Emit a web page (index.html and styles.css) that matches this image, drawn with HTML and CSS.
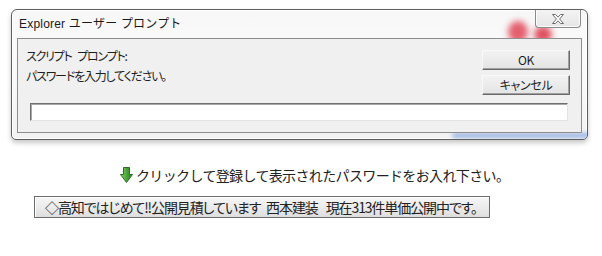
FILE: index.html
```html
<!DOCTYPE html>
<html lang="ja">
<head>
<meta charset="utf-8">
<title>Explorer ユーザー プロンプト</title>
<link rel="stylesheet" href="styles.css">
</head>
<body>
<div class="dialog">
  <div class="blob blob-red1"></div>
  <div class="blob blob-red2"></div>
  <div class="blob blob-blue"></div>
  <div class="titlebar">
    <span class="title">Explorer ユーザー プロンプト</span>
    <div class="close">
      <svg width="12" height="10" viewBox="0 0 12 10"><path d="M0.5 0.5 H3.5 L6 3.2 L8.5 0.5 H11.5 L7.6 5 L11.5 9.5 H8.5 L6 6.8 L3.5 9.5 H0.5 L4.4 5 Z" fill="#ffffff" stroke="#6d6d6d" stroke-width="1" stroke-linejoin="round"/></svg>
    </div>
  </div>
  <div class="panel">
    <div class="prompt-row">
      <div class="msg">
        <p>スクリプト プロンプト:</p>
        <p>パスワードを入力してください。</p>
      </div>
      <div class="btns">
        <div class="btn">OK</div>
        <div class="btn">キャンセル</div>
      </div>
    </div>
    <div class="input"></div>
  </div>
</div>
<div class="hint">
  <svg class="arrow" width="13" height="16" viewBox="0 0 13 16">
    <defs>
      <linearGradient id="g" x1="0" y1="0" x2="1" y2="0">
        <stop offset="0" stop-color="#8fd67a"/>
        <stop offset="0.5" stop-color="#4aa53a"/>
        <stop offset="1" stop-color="#2c7a24"/>
      </linearGradient>
    </defs>
    <path d="M3.5 0.5 H9.5 V7.5 H12.5 L6.5 15.5 L0.5 7.5 H3.5 Z" fill="url(#g)" stroke="#2f6b2a" stroke-width="1" stroke-linejoin="round"/>
  </svg>
  <span>クリックして登録して表示されたパスワードをお入れ下さい。</span>
</div>
<div class="notice">◇高知ではじめて!!公開見積しています&ensp;西本建装&ensp;&nbsp;現在313件単価公開中です。</div>
</body>
</html>
```
FILE: styles.css
```css
html, body {
  margin: 0;
  padding: 0;
  background: #ffffff;
}
body {
  padding-top: 9px;
  font-family: "Noto Sans CJK JP", "Liberation Sans", sans-serif;
  color: #222;
}
.dialog {
  position: relative;
  margin-left: 11px;
  width: 577px;
  height: 131px;
  box-sizing: border-box;
  border: 1px solid #5e5e5e;
  border-radius: 6px 6px 5px 5px;
  background: linear-gradient(180deg, #f7f7f7 0%, #fbfbfb 40%, #f2f2f2 100%);
  box-shadow: inset 0 0 0 1px rgba(255,255,255,0.9), 0 3px 5px rgba(0,0,0,0.22);
  overflow: hidden;
}
.blob {
  position: absolute;
  border-radius: 50%;
  filter: blur(3px);
}
.blob-red1 {
  left: 496px;
  top: 11px;
  width: 20px;
  height: 22px;
  background: #e45f6e;
}
.blob-red2 {
  left: 522px;
  top: 16px;
  width: 18px;
  height: 17px;
  background: #e0505f;
}
.blob-blue {
  left: 440px;
  top: 123px;
  width: 140px;
  height: 5px;
  background: #9bb4e4;
  border-radius: 3px;
  filter: blur(2px);
}
.titlebar {
  position: relative;
  height: 28px;
  display: flex;
  align-items: flex-start;
  justify-content: space-between;
}
.title {
  margin: 6px 0 0 7px;
  font-family: "Liberation Sans", "Noto Sans CJK JP", sans-serif;
  font-size: 12px;
  line-height: 16px;
  letter-spacing: 0.2px;
  color: #1a1a1a;
}
.close {
  margin: -1px 6px 0 0;
  width: 46px;
  height: 19px;
  box-sizing: border-box;
  border: 1px solid #8a8a8a;
  border-top: none;
  border-radius: 0 0 4px 4px;
  background: linear-gradient(180deg, #f4f4f4, #e6e6e6);
  box-shadow: inset 0 0 0 1px rgba(255,255,255,0.8);
  display: flex;
  align-items: center;
  justify-content: center;
}
.close svg {
  display: block;
  margin-top: 1px;
}
.panel {
  position: relative;
  margin: 0 5px;
  height: 95px;
  box-sizing: border-box;
  border: 1px solid #8e8e8e;
  background: #f0f0f0;
  padding: 11px 11px 0 8px;
}
.prompt-row {
  display: flex;
  justify-content: space-between;
  align-items: flex-start;
}
.msg p {
  margin: 0;
  font-size: 12px;
  line-height: 20px;
  height: 20px;
  margin-top: -4px;
  margin-bottom: 4px;
  color: #1e1e1e;
  font-feature-settings: "palt";
  letter-spacing: -1.2px;
  word-spacing: 4px;
}
.btns {
  display: flex;
  flex-direction: column;
  gap: 5px;
}
.btn {
  width: 88px;
  height: 20px;
  box-sizing: border-box;
  border: 1px solid;
  border-color: #f8f8f8 #6a6a6a #6a6a6a #f8f8f8;
  background: linear-gradient(180deg, #f2f2f2, #e4e4e4);
  box-shadow: inset -1px -1px 0 #a0a0a0;
  font-size: 12px;
  line-height: 18px;
  text-align: center;
  color: #1e1e1e;
  font-feature-settings: "palt";
  letter-spacing: -0.3px;
}
.input {
  margin: 8px 2px 0 4px;
  height: 18px;
  box-sizing: border-box;
  border: 1px solid;
  border-color: #6e6e6e #e4e4e4 #e4e4e4 #6e6e6e;
  box-shadow: inset 1px 1px 0 #a8a8a8;
  background: #ffffff;
}
.hint {
  margin: 27px 0 0 120px;
  height: 16px;
  display: flex;
  align-items: center;
  gap: 3px;
}
.arrow {
  display: block;
}
.hint span {
  font-size: 14px;
  line-height: 16px;
  letter-spacing: -0.64px;
  color: #222;
}
.notice {
  margin: 13px 0 0 34px;
  width: 456px;
  height: 22px;
  box-sizing: border-box;
  border: 1px solid #6c6c6c;
  background: linear-gradient(180deg, #f6f6f6 0%, #e9e9e9 60%, #dedede 100%);
  box-shadow: inset 1px 1px 0 #ffffff;
  padding-left: 10px;
  font-size: 14px;
  line-height: 20px;
  font-feature-settings: "palt";
  letter-spacing: -1.1px;
  word-spacing: 0;
  color: #222;
  white-space: nowrap;
}
```
